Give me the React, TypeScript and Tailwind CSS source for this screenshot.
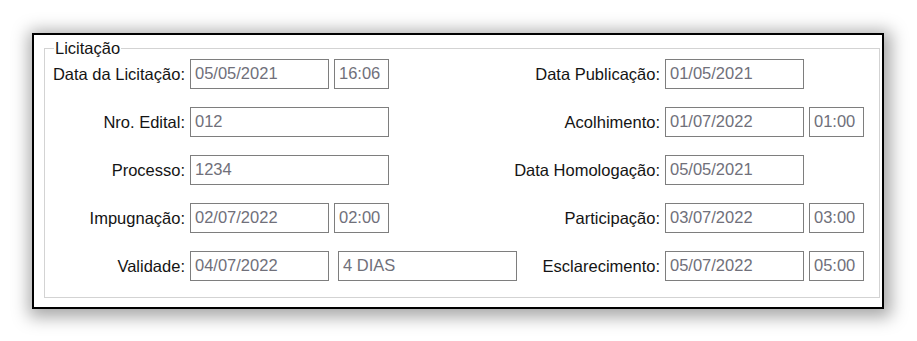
const font = { fontFamily: '"Liberation Sans", Arial, sans-serif' };

type Field = { value: string; w: string; gap?: string };
type Row = { left: string; leftFields: Field[]; right: string; rightFields: Field[] };

const rows: Row[] = [
  {
    left: "Data da Licitação:",
    leftFields: [
      { value: "05/05/2021", w: "w-[139px]" },
      { value: "16:06", w: "w-[55px]" },
    ],
    right: "Data Publicação:",
    rightFields: [{ value: "01/05/2021", w: "w-[139px]" }],
  },
  {
    left: "Nro. Edital:",
    leftFields: [{ value: "012", w: "w-[199px]" }],
    right: "Acolhimento:",
    rightFields: [
      { value: "01/07/2022", w: "w-[139px]" },
      { value: "01:00", w: "w-[55px]" },
    ],
  },
  {
    left: "Processo:",
    leftFields: [{ value: "1234", w: "w-[199px]" }],
    right: "Data Homologação:",
    rightFields: [{ value: "05/05/2021", w: "w-[139px]" }],
  },
  {
    left: "Impugnação:",
    leftFields: [
      { value: "02/07/2022", w: "w-[139px]" },
      { value: "02:00", w: "w-[55px]" },
    ],
    right: "Participação:",
    rightFields: [
      { value: "03/07/2022", w: "w-[139px]" },
      { value: "03:00", w: "w-[55px]" },
    ],
  },
  {
    left: "Validade:",
    leftFields: [
      { value: "04/07/2022", w: "w-[139px]" },
      { value: "4 DIAS", w: "w-[179px]", gap: "ml-[4px]" },
    ],
    right: "Esclarecimento:",
    rightFields: [
      { value: "05/07/2022", w: "w-[139px]" },
      { value: "05:00", w: "w-[55px]" },
    ],
  },
];

function Box({ field }: { field: Field }) {
  return (
    <div
      className={`${field.w} ${field.gap ?? ""} shrink-0 h-[30px] border border-[#7e7e7e] bg-white flex items-center pl-[4px] pb-[2px] text-[16.5px] text-[#70707a] whitespace-nowrap`}
    >
      {field.value}
    </div>
  );
}

function Side({ label, fields, labelW }: { label: string; fields: Field[]; labelW: string }) {
  return (
    <div className="flex items-center">
      <span className={`${labelW} shrink-0 text-right text-[16.5px] text-[#141414] whitespace-nowrap`}>{label}</span>
      <div className="ml-[5px] shrink-0 flex items-center gap-[5px]">
        {fields.map((f) => (
          <Box key={f.value} field={f} />
        ))}
      </div>
    </div>
  );
}

export default function App() {
  return (
    <div className="w-[917px] h-[341px] bg-white pl-[32px] pt-[33px]" style={font}>
      <div className="w-[852px] h-[276px] border-2 border-black bg-white shadow-[2px_3px_16px_5px_rgba(0,0,0,0.35)] pl-[10px] pr-[2px] pt-[3px]">
        <fieldset className="border border-[#d3d3d3] h-[260px] pb-0">
          <legend className="ml-[9px] px-px text-[16.5px] leading-[20px] text-[#141414]">Licitação</legend>
          <div className="flex flex-col gap-[18px] pt-px">
            {rows.map((r) => (
              <div key={r.left} className="grid grid-cols-[455px_1fr]">
                <Side label={r.left} fields={r.leftFields} labelW="w-[140px]" />
                <Side label={r.right} fields={r.rightFields} labelW="w-[160px]" />
              </div>
            ))}
          </div>
        </fieldset>
      </div>
    </div>
  );
}
